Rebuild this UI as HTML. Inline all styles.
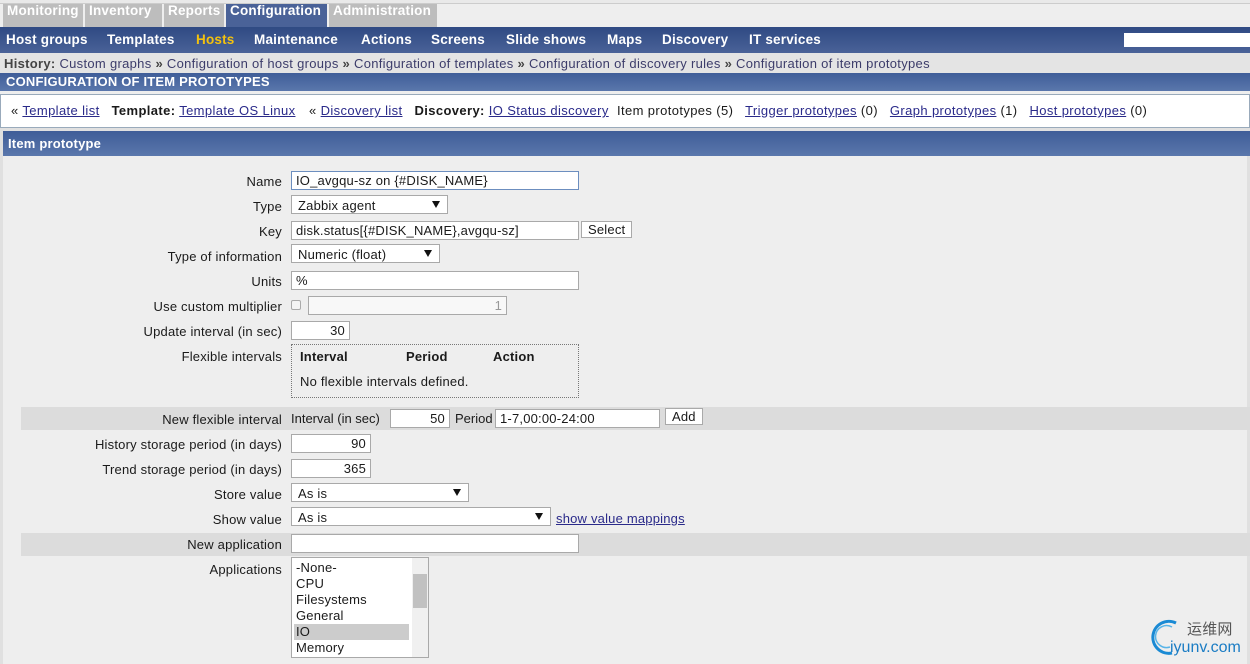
<!DOCTYPE html>
<html><head><meta charset="utf-8"><style>
*{margin:0;padding:0;box-sizing:border-box}
body{width:1250px;height:664px;overflow:hidden;background:#eeeeee;font-family:"Liberation Sans",Arial,sans-serif;font-size:13px;color:#1a1a1a;position:relative;letter-spacing:0.2px}
.a{position:absolute;white-space:nowrap}
.tab{position:absolute;top:4px;height:23px;background:#bdbdbd;color:#fff;font-weight:bold;font-size:13.5px;padding:0 0 0 4px;line-height:14px}
.nav{position:absolute;top:27px;left:0;width:1250px;height:26px;background:linear-gradient(#2f4a83,#4a6298)}
.nav span{position:absolute;top:5px;color:#fff;font-weight:bold;font-size:13.5px}
.bar{position:absolute;background:linear-gradient(#3f5d98,#5a77ac);color:#fff;font-weight:bold}
u{color:#2a2a8a}
.lbl{position:absolute;right:968px;white-space:nowrap}
.in{position:absolute;background:#fff;border:1px solid #a9a9a9;height:19px;padding:1px 4px;line-height:15px;white-space:nowrap}
.sel{position:absolute;background:#fff;border:1px solid #a9a9a9;height:19px;padding:1px 6px;line-height:17px}
.sel:after{content:"";position:absolute;right:7px;top:5px;border:4px solid transparent;border-top:7px solid #111;border-bottom:0}
.btn{position:absolute;background:#fff;border:1px solid #a9a9a9;height:17px;padding:0 6px;line-height:15px}
.lk{position:absolute;white-space:nowrap;top:103px;letter-spacing:0.38px}
</style></head><body>
<div class="a" style="left:0;top:0;width:1250px;height:4px;background:#e9e9e9;border-bottom:1px solid #ccc"></div>
<div class="tab" style="left:3px;width:80px">Monitoring</div>
<div class="tab" style="left:85px;width:77px">Inventory</div>
<div class="tab" style="left:164px;width:60px">Reports</div>
<div class="tab" style="left:226px;width:101px;background:#4a6298">Configuration</div>
<div class="tab" style="left:329px;width:108px">Administration</div>
<div class="nav">
<span style="left:6px">Host groups</span><span style="left:107px">Templates</span><span style="left:196px;color:#f4c20d">Hosts</span><span style="left:254px">Maintenance</span><span style="left:361px">Actions</span><span style="left:431px">Screens</span><span style="left:506px">Slide shows</span><span style="left:607px">Maps</span><span style="left:662px">Discovery</span><span style="left:749px">IT services</span>
<div class="a" style="left:1124px;top:6px;width:126px;height:14px;background:#fff"></div>
</div>
<div class="a" style="left:0;top:53px;width:1250px;height:20px;background:#e4e4e4"></div>
<div class="a" style="left:4px;top:56px;color:#444;letter-spacing:0.3px"><b>History:</b> <span style="color:#3c3c6a">Custom graphs</span> <b>»</b> <span style="color:#3c3c6a">Configuration of host groups</span> <b>»</b> <span style="color:#3c3c6a">Configuration of templates</span> <b>»</b> <span style="color:#3c3c6a">Configuration of discovery rules</span> <b>»</b> <span style="color:#3c3c6a">Configuration of item prototypes</span></div>
<div class="bar" style="left:0;top:73px;width:1250px;height:18px;font-size:13px;padding:1px 0 0 6px;line-height:16px">CONFIGURATION OF ITEM PROTOTYPES</div>
<div class="a" style="left:0;top:94px;width:1250px;height:34px;background:#fff;border:1px solid #9ab;"></div>
<div class="lk" style="left:11px">« <u>Template list</u> &nbsp; <b>Template:</b> <u>Template OS Linux</u></div>
<div class="lk" style="left:309px">« <u>Discovery list</u> &nbsp; <b>Discovery:</b> <u>IO Status discovery</u></div>
<div class="lk" style="left:617px">Item prototypes (5) &nbsp; <u>Trigger prototypes</u> (0) &nbsp; <u>Graph prototypes</u> (1) &nbsp; <u>Host prototypes</u> (0)</div>
<div class="a" style="left:0;top:128px;width:1250px;height:536px;border:3px solid #e0e0e0;border-bottom:0"></div>
<div class="bar" style="left:3px;top:131px;width:1247px;height:25px;padding:5px 0 0 5px;font-size:13px">Item prototype</div>
<div class="a" style="left:21px;top:407px;width:1229px;height:23px;background:#dcdcdc"></div>
<div class="a" style="left:21px;top:533px;width:1229px;height:23px;background:#dcdcdc"></div>

<div class="lbl" style="top:174px">Name</div>
<div class="in" style="left:291px;top:171px;width:288px;border-color:#6c8ebf">IO_avgqu-sz on {#DISK_NAME}</div>
<div class="lbl" style="top:199px">Type</div>
<div class="sel" style="left:291px;top:195px;width:157px">Zabbix agent</div>
<div class="lbl" style="top:224px">Key</div>
<div class="in" style="left:291px;top:221px;width:288px">disk.status[{#DISK_NAME},avgqu-sz]</div>
<div class="btn" style="left:581px;top:221px">Select</div>
<div class="lbl" style="top:249px">Type of information</div>
<div class="sel" style="left:291px;top:244px;width:149px">Numeric (float)</div>
<div class="lbl" style="top:274px">Units</div>
<div class="in" style="left:291px;top:271px;width:288px">%</div>
<div class="lbl" style="top:299px">Use custom multiplier</div>
<div class="a" style="left:291px;top:300px;width:10px;height:10px;border:1px solid #aaa;border-radius:2px;background:#f4f4f4"></div>
<div class="in" style="left:308px;top:296px;width:199px;text-align:right;color:#999;background:#f8f8f8">1</div>
<div class="lbl" style="top:324px">Update interval (in sec)</div>
<div class="in" style="left:291px;top:321px;width:59px;text-align:right">30</div>
<div class="lbl" style="top:349px">Flexible intervals</div>
<div class="a" style="left:291px;top:344px;width:288px;height:54px;border:1px dotted #777"></div>
<div class="a" style="left:300px;top:349px;font-weight:bold">Interval</div>
<div class="a" style="left:406px;top:349px;font-weight:bold">Period</div>
<div class="a" style="left:493px;top:349px;font-weight:bold">Action</div>
<div class="a" style="left:300px;top:374px">No flexible intervals defined.</div>
<div class="lbl" style="top:412px">New flexible interval</div>
<div class="a" style="left:291px;top:411px;letter-spacing:0">Interval (in sec)</div>
<div class="in" style="left:390px;top:409px;width:60px;text-align:right">50</div>
<div class="a" style="left:455px;top:411px;letter-spacing:0">Period</div>
<div class="in" style="left:495px;top:409px;width:165px">1-7,00:00-24:00</div>
<div class="btn" style="left:665px;top:408px">Add</div>
<div class="lbl" style="top:437px">History storage period (in days)</div>
<div class="in" style="left:291px;top:434px;width:80px;text-align:right">90</div>
<div class="lbl" style="top:462px">Trend storage period (in days)</div>
<div class="in" style="left:291px;top:459px;width:80px;text-align:right">365</div>
<div class="lbl" style="top:487px">Store value</div>
<div class="sel" style="left:291px;top:483px;width:178px">As is</div>
<div class="lbl" style="top:512px">Show value</div>
<div class="sel" style="left:291px;top:507px;width:260px">As is</div>
<div class="a" style="left:556px;top:511px"><u>show value mappings</u></div>
<div class="lbl" style="top:537px">New application</div>
<div class="in" style="left:291px;top:534px;width:288px"></div>
<div class="lbl" style="top:562px">Applications</div>
<div class="a" style="left:291px;top:557px;width:138px;height:101px;background:#fff;border:1px solid #a9a9a9;line-height:16px;padding:2px 0 0 4px">-None-<br>CPU<br>Filesystems<br>General<br><span style="display:block;background:#ccc;margin-left:-2px;padding-left:2px;width:115px">IO</span>Memory</div>
<div class="a" style="left:412px;top:558px;width:16px;height:99px;background:#f0f0f0"></div>
<div class="a" style="left:413px;top:574px;width:14px;height:34px;background:#c1c1c1"></div>

<svg class="a" style="left:1146px;top:617px" width="40" height="40" viewBox="0 0 40 40"><path d="M30 6 A16 16 0 1 0 26 36" fill="none" stroke="#1a8ad4" stroke-width="3"/><path d="M26 10 A11 11 0 1 0 24 30" fill="none" stroke="#58b4e8" stroke-width="1.5"/></svg>
<div class="a" style="left:1187px;top:620px;font-family:'Noto Sans CJK SC',sans-serif;font-size:15px;line-height:18px;color:#555">运维网</div>
<div class="a" style="left:1170px;top:639px;font-size:16px;line-height:18px;color:#1a7cc4;letter-spacing:0">iyunv.com</div>
</body></html>
